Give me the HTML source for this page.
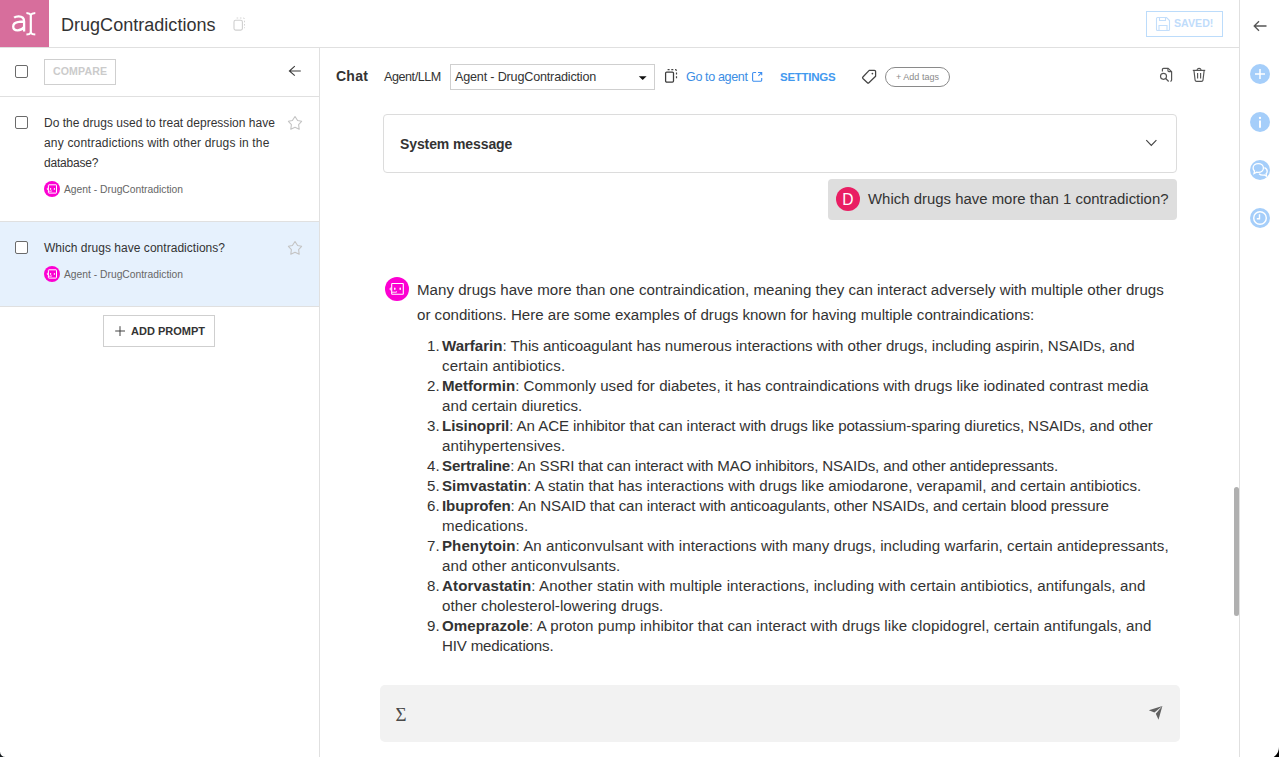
<!DOCTYPE html>
<html><head><meta charset="utf-8">
<style>
*{box-sizing:border-box;margin:0;padding:0}
html,body{width:1279px;height:757px;overflow:hidden;background:#fff}
body{position:relative;font-family:"Liberation Sans",sans-serif;color:#333}
.a{position:absolute}
.nw{white-space:nowrap}
svg{display:block}
.li{position:relative;padding-left:25px}
.n{position:absolute;left:10px}
b{font-weight:bold}
</style></head><body>

<!-- ===== TOP HEADER ===== -->
<div class="a" style="left:0;top:0;width:49px;height:47px;background:#d76e9c"></div>
<div class="a" style="left:0;top:47px;width:1239px;height:1px;background:#e0e0e0"></div>
<div class="a nw" id="title" style="left:61px;top:13px;font-size:18px;line-height:24px;color:#333"><span class="L" style="letter-spacing:0.025px">DrugContradictions</span></div>


<!-- logo glyphs -->
<svg class="a" style="left:0;top:0" width="49" height="47" viewBox="0 0 49 47">
 <path d="M14.1 17.7C15.2 16.8 16.8 16.4 18.6 16.4C22.3 16.4 24.1 18.2 24.1 21.6V31.4M24.1 21.5C22.2 21.5 20.3 21.6 18.7 21.9C14.9 22.4 13.2 24 13.2 26.5C13.2 29 15 30.3 17.6 30.3C20.4 30.3 22.7 29 24.1 27" fill="none" stroke="#fff" stroke-width="2.3"/>
 <path d="M30.8 14.3V33.4" fill="none" stroke="#fff" stroke-width="2.2"/>
 <path d="M26.4 12.9C28.2 13 30 13.5 30.8 14.6C31.6 13.5 33.4 13 35.3 12.9M26.4 34.5C28.2 34.4 30 33.9 30.8 32.8C31.6 33.9 33.4 34.4 35.3 34.5" fill="none" stroke="#fff" stroke-width="2"/>
</svg>
<!-- title copy icon -->
<svg class="a" style="left:231px;top:16px" width="16" height="16" viewBox="0 0 16 16">
 <rect x="3" y="4.3" width="8.4" height="9.8" rx="1.6" fill="none" stroke="#cfcfcf" stroke-width="1.1"/>
 <path d="M5.6 2H12.3A1.2 1.2 0 0 1 13.5 3.2V12.2" fill="none" stroke="#d4d4d4" stroke-width="1" stroke-dasharray="1.6 1.7"/>
</svg>
<!-- SAVED button -->
<div class="a" style="left:1146px;top:11px;width:77px;height:26px;border:1px solid #bcdcfb"></div>
<svg class="a" style="left:1155px;top:16px" width="16" height="16" viewBox="0 0 16 16">
 <path d="M2.5 1.5h9l3 3v9a1 1 0 0 1-1 1h-11a1 1 0 0 1-1-1v-11a1 1 0 0 1 1-1z" fill="none" stroke="#c3defb" stroke-width="1.1"/>
 <path d="M4.5 1.5v3h6v-3M4 14.5v-5h8v5" fill="none" stroke="#c3defb" stroke-width="1.1"/>
</svg>
<div class="a nw" style="left:1174px;top:17px;font-size:10.6px;font-weight:bold;line-height:13px;color:#bfdcfb"><span class="L" style="letter-spacing:0.032px">SAVED!</span></div>
<!-- rail back arrow -->
<svg class="a" style="left:1252px;top:19px" width="16" height="14" viewBox="0 0 16 14"><path d="M14.5 7H2.5M7 2.2L2.2 7 7 11.8" fill="none" stroke="#555" stroke-width="1.3"/></svg>
<!-- rail icons -->
<div class="a" style="left:1250px;top:64px;width:20px;height:20px;border-radius:50%;background:#a5cefa"></div>
<svg class="a" style="left:1250px;top:64px" width="20" height="20" viewBox="0 0 20 20"><path d="M10 5v10M5 10h10" stroke="#fff" stroke-width="1.5"/></svg>
<div class="a" style="left:1250px;top:112px;width:20px;height:20px;border-radius:50%;background:#a5cefa"></div>
<svg class="a" style="left:1250px;top:112px" width="20" height="20" viewBox="0 0 20 20"><circle cx="10" cy="6" r="1.15" fill="#fff"/><path d="M10 8.6v7.2" stroke="#fff" stroke-width="1.9"/></svg>
<div class="a" style="left:1250px;top:160px;width:20px;height:20px;border-radius:50%;background:#a5cefa"></div>
<svg class="a" style="left:1250px;top:160px" width="20" height="20" viewBox="0 0 20 20"><path d="M8.3 3.6c2.9 0 5.1 1.9 5.1 4.4s-2.2 4.4-5.1 4.4c-.6 0-1.1-.1-1.6-.2L4 13.6l.5-2.6C3.6 10.2 3.1 9.1 3.1 8c0-2.5 2.3-4.4 5.2-4.4z" fill="none" stroke="#fff" stroke-width="1.3"/><path d="M14.4 7.6c1.7.7 2.8 2.1 2.8 3.6 0 1-.4 1.9-1.1 2.6l.5 2.4-2.4-1.2c-.5.1-.9.2-1.4.2-1.5 0-2.9-.6-3.7-1.5" fill="none" stroke="#fff" stroke-width="1.3"/></svg>
<div class="a" style="left:1250px;top:208px;width:20px;height:20px;border-radius:50%;background:#a5cefa"></div>
<svg class="a" style="left:1250px;top:208px" width="20" height="20" viewBox="0 0 20 20"><circle cx="10" cy="10" r="6.3" fill="none" stroke="#fff" stroke-width="1.4"/><path d="M9.5 6.3v4.4H6.8" fill="none" stroke="#fff" stroke-width="1.4"/></svg>

<!-- right rail border -->
<div class="a" style="left:1239px;top:0;width:1px;height:757px;background:#e0e0e0"></div>

<!-- ===== LEFT PANEL ===== -->
<div class="a" style="left:319px;top:48px;width:1px;height:709px;background:#e0e0e0"></div>
<div class="a" style="left:0;top:96px;width:319px;height:1px;background:#e0e0e0"></div>
<div class="a" style="left:0;top:221px;width:319px;height:1px;background:#e0e0e0"></div>
<div class="a" style="left:0;top:222px;width:319px;height:84px;background:#e6f1fd"></div>
<div class="a" style="left:0;top:306px;width:319px;height:1px;background:#e0e0e0"></div>


<!-- compare row -->
<div class="a" style="left:15px;top:65px;width:13px;height:13px;border:1.5px solid #6b6b6b;border-radius:2px"></div>
<div class="a" style="left:44px;top:59px;width:72px;height:26px;border:1px solid #cfcfcf"></div>
<div class="a nw" style="left:53px;top:65px;font-size:10.6px;font-weight:bold;line-height:13px;color:#cbcbcb"><span class="L" style="letter-spacing:0.106px">COMPARE</span></div>
<svg class="a" style="left:286px;top:64px" width="16" height="14" viewBox="0 0 16 14"><path d="M14.8 7H3.4M8.8 2.2L3.4 7l5.4 4.7" fill="none" stroke="#3a3a3a" stroke-width="1.1"/></svg>

<!-- item 1 -->
<div class="a" style="left:15px;top:116px;width:13px;height:13px;border:1.5px solid #6b6b6b;border-radius:2px"></div>
<div class="a nw" style="left:44px;top:113px;font-size:12px;line-height:20px;color:#333"><span class="L" style="letter-spacing:0.018px">Do the drugs used to treat depression have</span><br><span class="L" style="letter-spacing:0.177px">any contradictions with other drugs in the</span><br><span class="L" style="letter-spacing:-0.195px">database?</span></div>
<svg class="a" style="left:44px;top:181px" width="16" height="16" viewBox="0 0 16 16"><circle cx="8" cy="8" r="8" fill="#fc00d2"/><rect x="4.4" y="3.8" width="8.1" height="8.3" rx="0.5" fill="none" stroke="#fff" stroke-width="1"/><path d="M4 7.1a.8.8 0 0 0 0 1.6" fill="none" stroke="#fff" stroke-width="0.9"/><ellipse cx="6.6" cy="7.9" rx="0.65" ry="0.9" fill="#fff"/><ellipse cx="10.4" cy="7.9" rx="0.65" ry="0.9" fill="#fff"/><path d="M4.4 10.2H7.6V9.6" fill="none" stroke="#fff" stroke-width="0.8"/></svg>
<div class="a nw" style="left:64px;top:184px;font-size:10.3px;line-height:12px;color:#666"><span class="L" style="letter-spacing:-0.002px">Agent - DrugContradiction</span></div>
<svg class="a" style="left:287px;top:115px" width="16" height="16" viewBox="0 0 16 16"><path d="M8 1.5L10.6 5.5L14.6 6.3L11.6 9.6L12.2 14.2L8 12.2L3.8 14.2L4.4 9.6L1.4 6.3L5.4 5.5Z" fill="none" stroke="#c4c4c4" stroke-width="1.1" stroke-linejoin="round"/></svg>

<!-- item 2 -->
<div class="a" style="left:15px;top:241px;width:13px;height:13px;border:1.5px solid #6b6b6b;border-radius:2px;background:#fff"></div>
<div class="a nw" style="left:44px;top:238px;font-size:12px;line-height:20px;color:#333"><span class="L" style="letter-spacing:0.029px">Which drugs have contradictions?</span></div>
<svg class="a" style="left:44px;top:266px" width="16" height="16" viewBox="0 0 16 16"><circle cx="8" cy="8" r="8" fill="#fc00d2"/><rect x="4.4" y="3.8" width="8.1" height="8.3" rx="0.5" fill="none" stroke="#fff" stroke-width="1"/><path d="M4 7.1a.8.8 0 0 0 0 1.6" fill="none" stroke="#fff" stroke-width="0.9"/><ellipse cx="6.6" cy="7.9" rx="0.65" ry="0.9" fill="#fff"/><ellipse cx="10.4" cy="7.9" rx="0.65" ry="0.9" fill="#fff"/><path d="M4.4 10.2H7.6V9.6" fill="none" stroke="#fff" stroke-width="0.8"/></svg>
<div class="a nw" style="left:64px;top:269px;font-size:10.3px;line-height:12px;color:#666"><span class="L" style="letter-spacing:-0.002px">Agent - DrugContradiction</span></div>
<svg class="a" style="left:287px;top:240px" width="16" height="16" viewBox="0 0 16 16"><path d="M8 1.5L10.6 5.5L14.6 6.3L11.6 9.6L12.2 14.2L8 12.2L3.8 14.2L4.4 9.6L1.4 6.3L5.4 5.5Z" fill="none" stroke="#c4c4c4" stroke-width="1.1" stroke-linejoin="round"/></svg>

<!-- add prompt -->
<div class="a" style="left:103px;top:315px;width:112px;height:32px;border:1px solid #cfcfcf"></div>
<svg class="a" style="left:114px;top:325px" width="12" height="12" viewBox="0 0 12 12"><path d="M6 1.2v9.8M1.2 6h9.8" stroke="#3a3a3a" stroke-width="0.95"/></svg>
<div class="a nw" style="left:131px;top:325px;font-size:11px;font-weight:bold;line-height:13px;color:#333"><span class="L" style="letter-spacing:0.005px">ADD PROMPT</span></div>

<!-- ===== MAIN ===== -->

<!-- chat toolbar -->
<div class="a nw" style="left:336px;top:68px;font-size:14px;font-weight:bold;line-height:16px;color:#333"><span class="L" style="letter-spacing:0.263px">Chat</span></div>
<div class="a nw" style="left:384px;top:69.5px;font-size:12.6px;line-height:15px;color:#333"><span class="L" style="letter-spacing:-0.453px">Agent/LLM</span></div>
<div class="a" style="left:450px;top:64px;width:205px;height:26px;border:1px solid #cfcfcf"></div>
<div class="a nw" style="left:455px;top:69.5px;font-size:12.6px;line-height:15px;color:#333"><span class="L" style="letter-spacing:-0.180px">Agent - DrugContradiction</span></div>
<svg class="a" style="left:638px;top:75px" width="10" height="6" viewBox="0 0 10 6"><path d="M0.8 1.2H8.6L4.7 4.9Z" fill="#111"/></svg>
<svg class="a" style="left:663px;top:68px" width="16" height="16" viewBox="0 0 16 16">
 <rect x="2.6" y="4" width="7.9" height="10.1" rx="1.1" fill="none" stroke="#3c3c3c" stroke-width="1.25"/>
 <path d="M4.6 1.6H12.3A1.2 1.2 0 0 1 13.5 2.8V11.8" fill="none" stroke="#444" stroke-width="1.2" stroke-dasharray="2 1.7"/>
</svg>
<div class="a nw" style="left:686px;top:69.5px;font-size:12.6px;line-height:15px;color:#3b8de4"><span class="L" style="letter-spacing:-0.392px">Go to agent</span></div>
<svg class="a" style="left:751px;top:71px" width="12" height="12" viewBox="0 0 12 12"><path d="M5.1 1.5H2.8A1.2 1.2 0 0 0 1.6 2.7V9A1.2 1.2 0 0 0 2.8 10.2H9.5A1.2 1.2 0 0 0 10.7 9V6.9M7 1.5H10.7V4.3M7.4 4.8L10.6 1.6" fill="none" stroke="#3d8ef0" stroke-width="1.1"/></svg>
<div class="a nw" style="left:780px;top:70px;font-size:11.5px;font-weight:bold;line-height:15px;color:#4299ef"><span class="L" style="letter-spacing:-0.258px">SETTINGS</span></div>
<svg class="a" style="left:860px;top:68px" width="18" height="18" viewBox="0 0 18 18"><path d="M9.2 2.4H14.4A1.2 1.2 0 0 1 15.6 3.6V8.3L8.9 14.8A1.1 1.1 0 0 1 7.4 14.8L2.9 10.5A1.1 1.1 0 0 1 2.9 9Z" fill="none" stroke="#444" stroke-width="1.25" stroke-linejoin="round"/><circle cx="12.4" cy="5.6" r="0.85" fill="#444"/></svg>
<div class="a" style="left:885px;top:67px;width:65px;height:20px;border:1px solid #8a8a8a;border-radius:10px"></div>
<div class="a nw" style="left:896px;top:71.6px;font-size:9px;line-height:11px;color:#8a8a8a"><span class="L" style="letter-spacing:0.023px">+ Add tags</span></div>
<!-- doc search icon -->
<svg class="a" style="left:1158px;top:67px" width="16" height="16" viewBox="0 0 16 16">
 <path d="M4.4 4.5V2.6A1.2 1.2 0 0 1 5.6 1.4H10.2L13.6 4.6V12.9A1.6 1.6 0 0 1 12.4 14.4" fill="none" stroke="#555" stroke-width="1.2" stroke-linejoin="round"/>
 <path d="M9.9 1.6V3.6A1 1 0 0 0 10.9 4.6H13.4" fill="none" stroke="#555" stroke-width="1.1"/>
 <circle cx="5.5" cy="9.3" r="3" fill="none" stroke="#555" stroke-width="1.15"/>
 <path d="M7.7 11.5L10.7 14.5" stroke="#555" stroke-width="1.2"/>
</svg>
<!-- trash icon -->
<svg class="a" style="left:1191px;top:67px" width="16" height="16" viewBox="0 0 16 16">
 <path d="M1.8 3.4H14.2" stroke="#555" stroke-width="1.2"/>
 <path d="M6.1 3.3A1.95 1.95 0 0 1 10 3.3" fill="none" stroke="#555" stroke-width="1.1"/>
 <path d="M3 3.9L4.1 13.1Q4.3 14.4 5.6 14.4H10.5Q11.8 14.4 12 13.1L13.1 3.9" fill="none" stroke="#555" stroke-width="1.15"/>
 <path d="M6.6 6.1V11.6M9.6 6.1V11.6" stroke="#555" stroke-width="1.15"/>
</svg>
<!-- system message box -->
<div class="a" style="left:383px;top:114px;width:794px;height:59px;border:1px solid #dcdcdc;border-radius:4px"></div>
<div class="a nw" style="left:400px;top:135px;font-size:14px;font-weight:bold;line-height:18px;color:#333"><span class="L" style="letter-spacing:-0.102px">System message</span></div>

<!-- user bubble -->
<div class="a" style="left:828px;top:179px;width:349px;height:41px;background:#dedede;border-radius:4px"></div>
<div class="a" style="left:836px;top:187px;width:24px;height:24px;border-radius:50%;background:#e91e63"></div>
<div class="a nw" style="left:868px;top:190px;font-size:14.9px;line-height:18px;color:#333"><span class="L" style="letter-spacing:0.020px">Which drugs have more than 1 contradiction?</span></div>

<!-- assistant -->



<svg class="a" style="left:1144px;top:136px" width="14" height="14" viewBox="0 0 14 14"><path d="M2.3 4.1L7.3 9.4L12.4 4.1" fill="none" stroke="#444" stroke-width="1.15"/></svg>
<div class="a nw" style="left:836px;top:190px;width:24px;text-align:center;font-size:15.6px;line-height:20px;color:#fff">D</div>
<svg class="a" style="left:385px;top:277px" width="24" height="24" viewBox="0 0 24 24"><circle cx="12" cy="12" r="12" fill="#fc00d2"/><rect x="6.7" y="6.5" width="11.6" height="10.8" rx="0.6" fill="none" stroke="#fff" stroke-width="1.1"/>
 <path d="M6.2 10.8a1.2 1.2 0 0 0 0 2.4" fill="none" stroke="#fff" stroke-width="1"/>
 <ellipse cx="9.8" cy="11.8" rx="0.8" ry="1.2" fill="#fff"/><ellipse cx="15.2" cy="11.8" rx="0.8" ry="1.2" fill="#fff"/>
 <path d="M6.7 15.2h4.8v-.8" fill="none" stroke="#fff" stroke-width="0.9"/></svg>
<div class="a nw" id="para" style="left:417px;top:277px;font-size:15.1px;line-height:25px;color:#333"><span class="L" style="letter-spacing:0.016px">Many drugs have more than one contraindication, meaning they can interact adversely with multiple other drugs</span><br><span class="L" style="letter-spacing:-0.002px">or conditions. Here are some examples of drugs known for having multiple contraindications:</span></div>
<div class="a nw" id="list" style="left:417px;top:336px;font-size:15.1px;line-height:20px;color:#333">
<div class="li"><span class="n">1.</span><span class="L" style="letter-spacing:-0.036px"><b>Warfarin</b>: This anticoagulant has numerous interactions with other drugs, including aspirin, NSAIDs, and</span><br><span class="L" style="letter-spacing:0.120px">certain antibiotics.</span></div>
<div class="li"><span class="n">2.</span><span class="L" style="letter-spacing:0.025px"><b>Metformin</b>: Commonly used for diabetes, it has contraindications with drugs like iodinated contrast media</span><br><span class="L" style="letter-spacing:0.049px">and certain diuretics.</span></div>
<div class="li"><span class="n">3.</span><span class="L" style="letter-spacing:-0.076px"><b>Lisinopril</b>: An ACE inhibitor that can interact with drugs like potassium-sparing diuretics, NSAIDs, and other</span><br><span class="L" style="letter-spacing:0.085px">antihypertensives.</span></div>
<div class="li"><span class="n">4.</span><span class="L" style="letter-spacing:-0.152px"><b>Sertraline</b>: An SSRI that can interact with MAO inhibitors, NSAIDs, and other antidepressants.</span></div>
<div class="li"><span class="n">5.</span><span class="L" style="letter-spacing:0.020px"><b>Simvastatin</b>: A statin that has interactions with drugs like amiodarone, verapamil, and certain antibiotics.</span></div>
<div class="li"><span class="n">6.</span><span class="L" style="letter-spacing:-0.113px"><b>Ibuprofen</b>: An NSAID that can interact with anticoagulants, other NSAIDs, and certain blood pressure</span><br><span class="L" style="letter-spacing:0.132px">medications.</span></div>
<div class="li"><span class="n">7.</span><span class="L" style="letter-spacing:0.056px"><b>Phenytoin</b>: An anticonvulsant with interactions with many drugs, including warfarin, certain antidepressants,</span><br><span class="L" style="letter-spacing:0.083px">and other anticonvulsants.</span></div>
<div class="li"><span class="n">8.</span><span class="L" style="letter-spacing:0.103px"><b>Atorvastatin</b>: Another statin with multiple interactions, including with certain antibiotics, antifungals, and</span><br><span class="L" style="letter-spacing:0.072px">other cholesterol-lowering drugs.</span></div>
<div class="li"><span class="n">9.</span><span class="L" style="letter-spacing:0.067px"><b>Omeprazole</b>: A proton pump inhibitor that can interact with drugs like clopidogrel, certain antifungals, and</span><br><span class="L" style="letter-spacing:-0.166px">HIV medications.</span></div>
</div>
<!-- input -->
<div class="a" style="left:380px;top:685px;width:800px;height:57px;background:#f2f2f2;border-radius:5px"></div>


<div class="a nw" style="left:395.5px;top:703px;font-family:'Liberation Serif',serif;font-size:19px;line-height:24px;color:#4a4a4a">&Sigma;</div>
<svg class="a" style="left:1147px;top:704px" width="18" height="18" viewBox="0 0 18 18"><path d="M15.4 2.1L1.8 6.3L7.4 8.5Z M15.4 2.1L8.8 9.8L11.5 15.7Z" fill="#626262"/></svg>
<!-- black corner -->
<div class="a" style="left:1259px;top:737px;width:20px;height:20px;overflow:hidden"><div style="position:absolute;left:-4px;top:-2px;width:24px;height:24px;border-bottom-right-radius:12px;box-shadow:0 0 0 20px #000"></div></div>

<div class="a" style="left:0;top:737px;width:20px;height:20px;overflow:hidden"><div style="position:absolute;left:0;top:-4px;width:24px;height:24px;border-bottom-left-radius:5.5px;box-shadow:0 0 0 20px #151a1e"></div></div>
<!-- scrollbar -->
<div class="a" style="left:1234px;top:487px;width:5px;height:129px;background:#b0b0b0;border-radius:3px"></div>

</body></html>
